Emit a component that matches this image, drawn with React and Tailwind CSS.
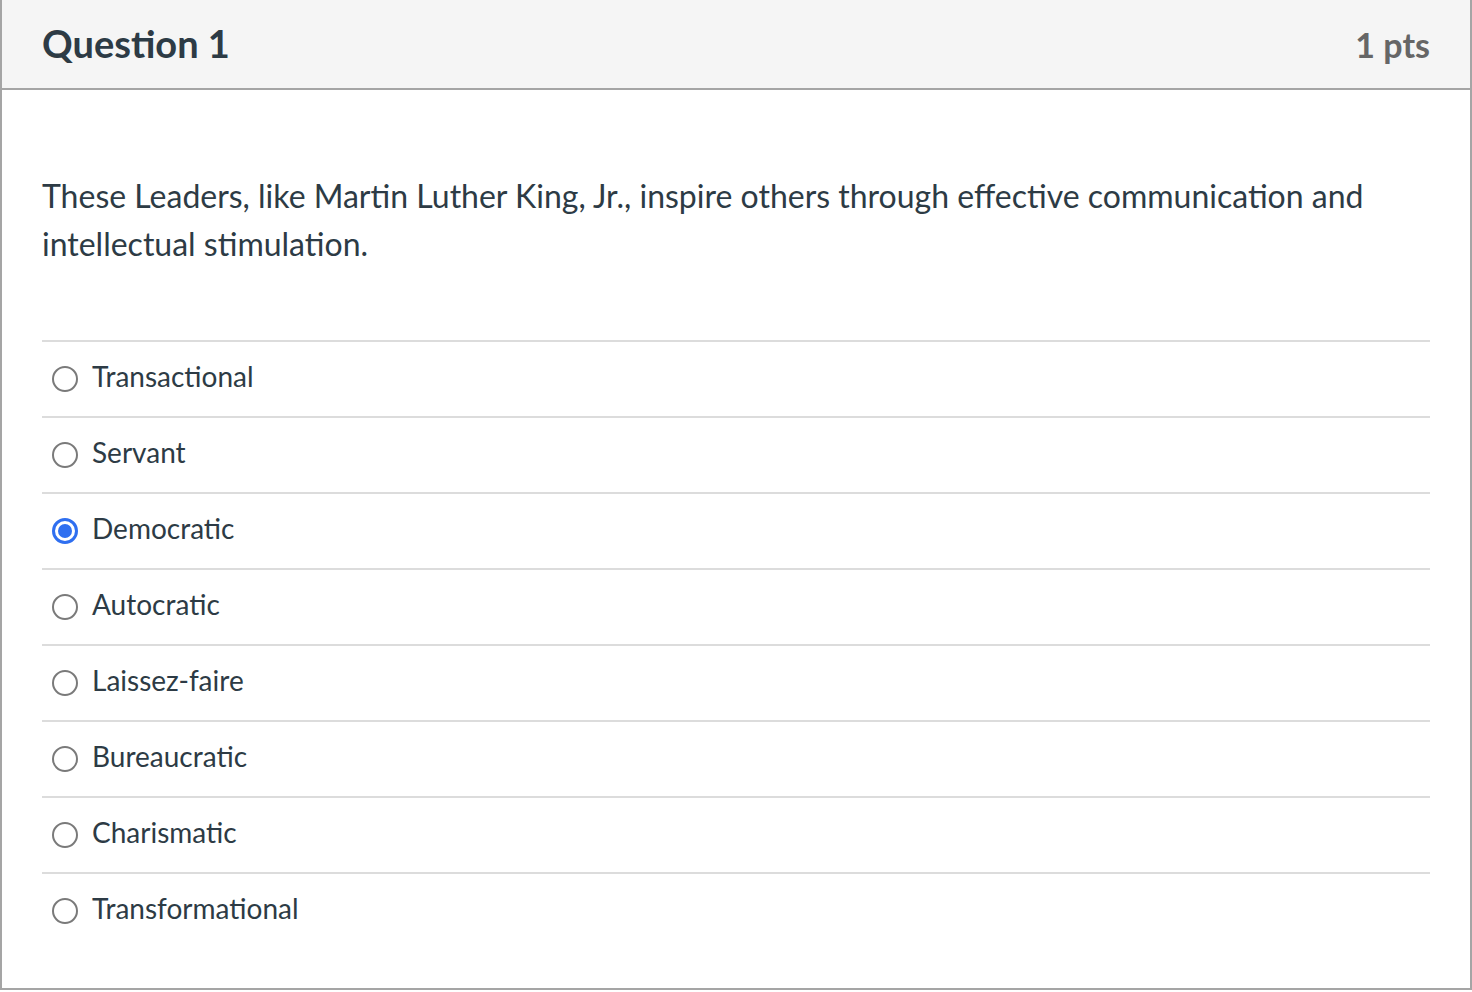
import { useState } from 'react';

const ANSWERS = [
  'Transactional',
  'Servant',
  'Democratic',
  'Autocratic',
  'Laissez-faire',
  'Bureaucratic',
  'Charismatic',
  'Transformational',
];

function Radio({ checked }) {
  if (checked) {
    return (
      <span className="flex h-[26px] w-[26px] shrink-0 items-center justify-center rounded-full border-[3px] border-[#2f6ff0] bg-white">
        <span className="h-[14px] w-[14px] rounded-full bg-[#2f6ff0]" />
      </span>
    );
  }
  return <span className="h-[26px] w-[26px] shrink-0 rounded-full border-2 border-[#7a7a7a] bg-white" />;
}

export default function App() {
  const [selected, setSelected] = useState('Democratic');

  return (
    <div className="min-h-screen bg-white font-['Lato','Noto_Sans',sans-serif] text-[#2d3b45]">
      <div className="border-x-2 border-b-2 border-[#a5a5a5]">
        <div className="flex h-[90px] items-baseline justify-between border-b-2 border-[#a5a5a5] bg-[#f5f5f5] px-10 pt-[15px]">
          <h2 className="text-[38px] font-bold leading-normal">Question 1</h2>
          <span className="text-[34px] font-bold leading-normal text-[#666666]">1 pts</span>
        </div>

        <div className="px-10 pt-[82px] pb-[40px]">
          <p className="text-[32px] leading-[48px]">
            These Leaders, like Martin Luther King, Jr., inspire others through effective communication and intellectual
            stimulation.
          </p>

          <div className="mt-[72px]">
            {ANSWERS.map((answer) => (
              <label
                key={answer}
                onClick={() => setSelected(answer)}
                className="flex h-[76px] cursor-pointer items-center gap-[14px] border-t-2 border-[#dcdcdc] pl-[10px]"
              >
                <Radio checked={selected === answer} />
                <span className="pb-[6px] text-[28px] leading-normal">{answer}</span>
              </label>
            ))}
          </div>
        </div>
      </div>
    </div>
  );
}
